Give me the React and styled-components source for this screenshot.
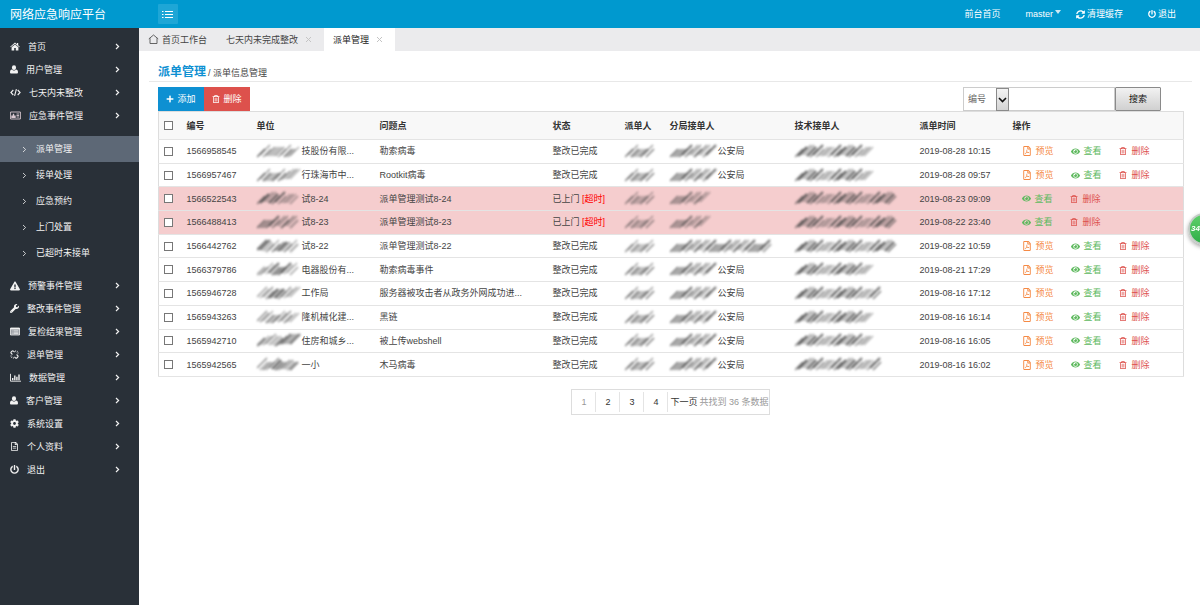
import React from "react";
import styled, { createGlobalStyle, css } from "styled-components";
import {
  FaExclamationTriangle, FaWrench, FaCog, FaRegFileAlt, FaPowerOff,
  FaPlus, FaRegTrashAlt, FaRegFilePdf, FaEye, FaSyncAlt,
} from "react-icons/fa";

const Global = createGlobalStyle`
  * { box-sizing: border-box; }
  body {
    margin: 0;
    background: #fff;
    color: #444;
    font: 9px/12px "Liberation Sans", "Noto Sans CJK SC", sans-serif;
  }
  button, input, select { font: inherit; color: inherit; margin: 0; }
  a { color: inherit; text-decoration: none; }
`;

const Page = styled.div`
  display: flex;
  flex-direction: column;
  min-height: 100vh;
`;

const TopBar = styled.header`
  display: flex;
  align-items: center;
  height: 28px;
  padding-right: 24px;
  background: #0099cf;
  color: #fff;
`;

const Brand = styled.div`
  width: 158px;
  padding: 2px 0 0 10px;
  font-size: 12px;
  line-height: 20px;
`;

const MenuToggle = styled.button`
  display: grid;
  place-items: center;
  width: 20px;
  height: 20px;
  padding: 0;
  border: 0;
  border-radius: 1px;
  background: #1ea6d6;
`;

const TopLinks = styled.nav`
  display: flex;
  align-items: center;
  gap: 25px;
  margin-left: auto;
`;

const AccountLinks = styled.div`
  display: flex;
  gap: 15px;
`;

const TopLink = styled.a`
  display: flex;
  align-items: center;
  gap: 2px;
`;

const Caret = styled.span`
  border: 3px solid transparent;
  border-top: 4px solid #cdeaf5;
  border-bottom: 0;
  margin-bottom: 4px;
`;

const Body = styled.div`
  display: flex;
  flex: 1;
`;

const Sidebar = styled.aside`
  flex: none;
  width: 139px;
  padding-top: 7px;
  background: #293038;
  color: #f2f2f2;
`;

const MenuItem = styled.a`
  display: flex;
  align-items: center;
  gap: 8px;
  height: 23px;
  padding: 0 19px 0 10px;
  svg { flex: none; }
  & > svg:last-child { margin-left: auto; }
`;

const SubMenu = styled.div`
  padding: 9px 0 8px;
`;

const SubItem = styled.a`
  display: flex;
  align-items: center;
  gap: 9px;
  height: 26px;
  padding-left: 22px;
  background: ${(p) => (p.$active ? "#5d6876" : "transparent")};
`;

const Main = styled.main`
  flex: 1;
  min-width: 0;
`;

const Tabs = styled.nav`
  display: flex;
  height: 23px;
  background: #ebebed;
`;

const Tab = styled.a`
  display: flex;
  align-items: center;
  gap: ${(p) => (p.$home ? "3px" : "7px")};
  padding: 0 ${(p) => (p.$home ? "10px" : "12px")} 0 9px;
  color: ${(p) => (p.$active ? "#222" : "#444")};
  background: ${(p) => (p.$active ? "#fff" : "transparent")};
`;

const Heading = styled.div`
  display: flex;
  align-items: baseline;
  gap: 2px;
  height: 31px;
  margin: 0 8px 0 10px;
  padding: 11px 0 0 9px;
  border-bottom: 1px solid #e8e8e8;
`;

const Title = styled.h1`
  margin: 0;
  color: #0e90d2;
  font-size: 12px;
  line-height: 20px;
`;

const Content = styled.section`
  padding: 5px 17px 0 19px;
`;

const Toolbar = styled.div`
  display: flex;
  justify-content: space-between;
  padding-right: 22px;
  height: 24px;
`;

const Group = styled.div`
  display: flex;
`;

const ActionButton = styled.button`
  display: flex;
  align-items: center;
  justify-content: center;
  gap: 3px;
  width: 46px;
  height: 24px;
  padding: 0;
  border: 0;
  color: #fff;
  background: ${(p) => (p.$danger ? "#dd514c" : "#0e90d2")};
`;

const SelectWrap = styled.div`
  display: flex;
  position: relative;
  width: 46px;
`;

const Select = styled.select`
  appearance: none;
  width: 100%;
  padding: 0 0 0 4px;
  border: 1px solid #ccc;
  border-radius: 0;
  background: #fff;
  color: #666;
`;

const SelectArrow = styled.span`
  position: absolute;
  top: 1px;
  right: 0;
  bottom: 0;
  display: grid;
  place-items: center;
  width: 13px;
  border: 1px solid #8a8a8a;
  background: linear-gradient(#f4f4f4, #d4d4d4);
  pointer-events: none;
`;

const SearchInput = styled.input`
  width: 106px;
  border: 1px solid #ccc;
  border-left: 0;
  border-radius: 0;
  padding: 0 4px;
  background: #fff;
`;

const SearchButton = styled.button`
  width: 46px;
  padding: 0;
  border: 1px solid #8a8a8a;
  border-radius: 1px;
  background: linear-gradient(#f2f2f2, #d0d0d0);
  color: #111;
`;

const Table = styled.table`
  width: 100%;
  height: 266px;
  table-layout: fixed;
  border-collapse: collapse;
  border: 1px solid #ddd;
  th, td {
    padding: 0 0 0 5px;
    text-align: left;
    white-space: nowrap;
    border-bottom: 1px solid #e4e4e4;
  }
  th { height: 28px; background: #f8f8f8; color: #333; }
`;

const Row = styled.tr`
  background: ${(p) => (p.$overdue ? "#f5cdce" : "#fff")};
`;

const Cell = styled.div`
  display: flex;
  align-items: center;
`;

const Check = styled.input.attrs({ type: "checkbox" })`
  appearance: none;
  display: block;
  width: 9px;
  height: 9px;
  border: 1px solid #777;
  background: #fff;
  &:checked { background: #0e90d2; }
`;

const Overdue = styled.span`
  color: #f00;
`;

const Actions = styled.div`
  display: flex;
  align-items: center;
  gap: 17px;
  padding-left: 9px;
`;

const tones = {
  preview: css`color: #f58a45; gap: 4px;`,
  view: css`color: #5eb95e; gap: 4px;`,
  remove: css`color: #dd514c; gap: 5px;`,
};

const ActionLink = styled.a`
  display: flex;
  align-items: center;
  ${(p) => tones[p.$tone]}
`;

const Pager = styled.nav`
  display: flex;
  align-items: center;
  width: max-content;
  height: 26px;
  margin: 12px auto 0;
  border: 1px solid #ddd;
  color: #999;
`;

const PageLink = styled.a`
  width: 24px;
  line-height: 20px;
  text-align: center;
  border-right: 1px solid #e4e4e4;
  color: ${(p) => (p.$current ? "#999" : "#333")};
`;

const NextLink = styled.a`
  padding: 0 2px;
  color: #333;
`;

const Badge = styled.div`
  position: fixed;
  top: 213px;
  right: -20px;
  width: 32px;
  height: 32px;
  padding-left: 1px;
  border: 2px solid #c3ccc6;
  border-radius: 50%;
  background: linear-gradient(#5fd06b, #2fae48);
  box-shadow: 0 2px 4px rgba(0, 0, 0, 0.35);
  color: #fff;
  font-size: 8px;
  font-weight: bold;
  font-style: italic;
  line-height: 28px;
`;

const SmudgeSvg = styled.svg`
  display: block;
  flex: none;
  filter: blur(1px);
`;

/* Names are hidden behind slanted, smeared strokes. */
function Smudge({ width, seed = 1, light }) {
  const strokes = [];
  for (let x = 0, i = seed; x < width - 9; x += 3, i += 1) {
    const n = (i * i * 3 + seed * 5) % 13;
    const y = 13 - (n % 3);
    const len = 8 + (n % 3);
    strokes.push(
      <line key={x} x1={x} y1={y} x2={x + len} y2={y - len}
        stroke="#444" strokeWidth={n % 4 === 0 ? 2.4 : 1.4} opacity={(light ? 0.35 : 0.42) + (n % 5) * 0.09} />
    );
  }
  return (
    <SmudgeSvg width={width} height="15" aria-hidden="true">
      {strokes}
    </SmudgeSvg>
  );
}

const Chevron = ({ small }) => (
  <svg width="5" height="7" viewBox="0 0 5 7" fill="none" stroke="currentColor" strokeWidth={small ? 0.8 : 1.2}>
    <path d="M1 1l2.6 2.5L1 6" />
  </svg>
);

const Close = () => (
  <svg width="7" height="7" viewBox="0 0 7 7" stroke="#c4c4c4" strokeWidth="1">
    <path d="M1 1l5 5M6 1L1 6" />
  </svg>
);

const HomeIcon = () => (
  <svg width="10" height="9" viewBox="0 0 10 9" fill="currentColor">
    <path d="M5 .6L6.9 2.2V1h1.3v2.3L9.8 4.7l-.5.6L5 1.8.7 5.3l-.5-.6z" />
    <path d="M5 2.5L8.4 5.3v3.1H5.8V6H4.2v2.4H1.6V5.3z" />
  </svg>
);

const UserIcon = () => (
  <svg width="8" height="9" viewBox="0 0 8 9" fill="currentColor">
    <ellipse cx="4" cy="2.7" rx="2.1" ry="2.4" />
    <path d="M2 4.5c.6.8 1.2 1.1 2 1.1s1.400-.3 2-1.100C7.400 4.700 8 5.700 8 7.300 8 8.100 7.500 8.600 6.700 8.600H1.300C.5 8.600 0 8.100 0 7.300 0 5.700.6 4.700 2 4.500z" />
  </svg>
);

const CodeIcon = () => (
  <svg width="11" height="9" viewBox="0 0 11 9" fill="none" stroke="currentColor" strokeWidth="1.1">
    <path d="M3.300 2L.9 4.500l2.400 2.500M7.700 2l2.400 2.500L7.700 7M6.400 1.200L4.600 7.800" />
  </svg>
);

const CardIcon = () => (
  <svg width="11" height="9" viewBox="0 0 11 9" fill="none" stroke="#d9c8d0" strokeWidth="0.9">
    <path d="M.6 1h9.800v7H.6zM6.500 3h2.600M6.500 4.500h2.600M6.500 6h2.600" />
    <path d="M2 6.400V5.200h3v1.200zM3.500 2.700v2" strokeWidth="1.400" />
  </svg>
);

const ListIcon = () => (
  <svg width="10" height="9" viewBox="0 0 10 9" fill="none" stroke="currentColor" strokeWidth="0.8">
    <path d="M.5 1h9v7h-9z" fill="#8d9299" />
    <path d="M.5 1.700h9" strokeWidth="1.500" />
    <path d="M1.700 3.800h.9M3.400 3.800h5M1.700 5.200h.9M3.400 5.200h5M1.700 6.600h.9M3.400 6.600h5" />
  </svg>
);

const BrokenChainIcon = () => (
  <svg width="9" height="9" viewBox="0 0 9 9" fill="none" stroke="currentColor" strokeWidth="1.100">
    <path d="M4.600 2.200L3.500 1.200c-.5-.5-1.100-.4-1.500 0l-.7.7c-.4.4-.5 1 0 1.500l1.100 1.100" />
    <path d="M4.400 6.800l1.100 1c.5.5 1.100.4 1.500 0l.7-.7c.4-.4.5-1 0-1.500L6.600 4.500" />
    <path d="M5.600.3v1.500M8.700 3H7.200M7.900 1L6.700 2.200M.3 6h1.500M3.400 8.700V7.200M1.100 8l1.200-1.200" strokeWidth="0.7" />
  </svg>
);

const ChartIcon = () => (
  <svg width="11" height="9" viewBox="0 0 11 9" fill="none" stroke="currentColor">
    <path d="M.5.8v7.400H11" strokeWidth="0.9" />
    <path d="M2.700 7.200V5M4.800 7.200V2.600M6.900 7.200V3.800M9 7.200V1.600" strokeWidth="1.400" />
  </svg>
);

const before = [
  ["首页", HomeIcon],
  ["用户管理", UserIcon],
  ["七天内未整改", CodeIcon],
  ["应急事件管理", CardIcon],
];
const sub = ["派单管理", "接单处理", "应急预约", "上门处置", "已超时未接单"];
const after = [
  ["预警事件管理", FaExclamationTriangle, 10],
  ["整改事件管理", FaWrench, 9],
  ["复检结果管理", ListIcon],
  ["退单管理", BrokenChainIcon],
  ["数据管理", ChartIcon],
  ["客户管理", UserIcon],
  ["系统设置", FaCog, 9],
  ["个人资料", FaRegFileAlt, 9],
  ["退出", FaPowerOff, 9],
];

const columns = [
  ["编号", 70], ["单位", 123], ["问题点", 173], ["状态", 72], ["派单人", 45],
  ["分局接单人", 125], ["技术接单人", 125], ["派单时间", 93], ["操作", 176],
];

const rows = [
  { id: "1566958545", unit: "技股份有限...", issue: "勒索病毒", time: "2019-08-28 10:15", tech: 80 },
  { id: "1566957467", unit: "行珠海市中...", issue: "Rootkit病毒", time: "2019-08-28 09:57", tech: 80 },
  { id: "1566522543", unit: "试8-24", issue: "派单管理测试8-24", time: "2019-08-23 09:09", tech: 105, late: true, branch: 42 },
  { id: "1566488413", unit: "试8-23", issue: "派单管理测试8-23", time: "2019-08-22 23:40", tech: 105, late: true, branch: 42 },
  { id: "1566442762", unit: "试8-22", issue: "派单管理测试8-22", time: "2019-08-22 10:59", tech: 105, branch: 105 },
  { id: "1566379786", unit: "电器股份有...", issue: "勒索病毒事件", time: "2019-08-21 17:29", tech: 80 },
  { id: "1565946728", unit: "工作局", issue: "服务器被攻击者从政务外网成功进...", time: "2019-08-16 17:12", tech: 90 },
  { id: "1565943263", unit: "隆机械化建...", issue: "黑链", time: "2019-08-16 16:14", tech: 80 },
  { id: "1565942710", unit: "住房和城乡...", issue: "被上传webshell", time: "2019-08-16 16:05", tech: 80 },
  { id: "1565942565", unit: "一小", issue: "木马病毒", time: "2019-08-16 16:02", tech: 90 },
];

function Menu({ items }) {
  return items.map(([label, Icon, size]) => (
    <MenuItem href="#" key={label}>
      <Icon size={size} />
      <span>{label}</span>
      <Chevron />
    </MenuItem>
  ));
}

function OrderRow({ row, index }) {
  return (
    <Row $overdue={row.late}>
      <td><Check aria-label={`选择 ${row.id}`} /></td>
      <td>{row.id}</td>
      <td><Cell><Smudge width={45} seed={index + 2} />{row.unit}</Cell></td>
      <td>{row.issue}</td>
      <td>{row.late ? <>已上门 <Overdue>[超时]</Overdue></> : "整改已完成"}</td>
      <td><Smudge width={31} seed={3} light={!!row.branch} /></td>
      <td>
        <Cell>
          <Smudge width={row.branch || 48} seed={5} light={row.late} />
          {!row.branch && "公安局"}
        </Cell>
      </td>
      <td><Smudge width={row.tech} seed={4} /></td>
      <td>{row.time}</td>
      <td>
        <Actions>
          {!row.late && <ActionLink href="#" $tone="preview"><FaRegFilePdf size={10} />预览</ActionLink>}
          <ActionLink href="#" $tone="view"><FaEye size={9} />查看</ActionLink>
          <ActionLink href="#" $tone="remove"><FaRegTrashAlt size={8} />删除</ActionLink>
        </Actions>
      </td>
    </Row>
  );
}

export default function App() {
  return (
    <Page>
      <Global />
      <TopBar>
        <Brand>网络应急响应平台</Brand>
        <MenuToggle aria-label="菜单">
          <svg width="12" height="9" viewBox="0 0 12 9" stroke="#fff" strokeWidth="1">
            <path d="M0 1.5h1.5M3 1.5h8M0 4.5h1.5M3 4.5h8M0 7.5h1.5M3 7.5h8" />
          </svg>
        </MenuToggle>
        <TopLinks>
          <TopLink href="#">前台首页</TopLink>
          <AccountLinks>
            <TopLink href="#">master<Caret /></TopLink>
            <TopLink href="#"><FaSyncAlt size={9} />清理缓存</TopLink>
          </AccountLinks>
          <TopLink href="#"><FaPowerOff size={8} />退出</TopLink>
        </TopLinks>
      </TopBar>
      <Body>
        <Sidebar>
          <Menu items={before} />
          <SubMenu>
            {sub.map((label, i) => (
              <SubItem href="#" key={label} $active={i === 0}><Chevron small />{label}</SubItem>
            ))}
          </SubMenu>
          <Menu items={after} />
        </Sidebar>
        <Main>
          <Tabs>
            <Tab href="#" $home>
              <svg width="11" height="11" viewBox="0 0 11 11" fill="none" stroke="#555" strokeWidth="0.9">
                <path d="M.8 4.9L5.5 1l4.7 3.9M2 4.2v5.3h7V4.2" />
              </svg>
              首页工作台
            </Tab>
            <Tab href="#">七天内未完成整改<Close /></Tab>
            <Tab href="#" $active>派单管理<Close /></Tab>
          </Tabs>
          <Heading>
            <Title>派单管理</Title>
            <span>/ 派单信息管理</span>
          </Heading>
          <Content>
            <Toolbar>
              <Group>
                <ActionButton><FaPlus size={8} />添加</ActionButton>
                <ActionButton $danger><FaRegTrashAlt size={8} />删除</ActionButton>
              </Group>
              <Group>
                <SelectWrap>
                  <Select aria-label="搜索字段" defaultValue="编号"><option>编号</option></Select>
                  <SelectArrow>
                    <svg width="9" height="6" viewBox="0 0 9 6" fill="none" stroke="#111" strokeWidth="1.6">
                      <path d="M1 1l3.5 3.5L8 1" />
                    </svg>
                  </SelectArrow>
                </SelectWrap>
                <SearchInput aria-label="搜索内容" />
                <SearchButton>搜索</SearchButton>
              </Group>
            </Toolbar>
            <Table>
              <colgroup>
                <col width="23" />
                {columns.map(([label, width]) => <col key={label} width={width} />)}
              </colgroup>
              <thead>
                <tr>
                  <th><Check aria-label="全选" /></th>
                  {columns.map(([label]) => <th key={label}>{label}</th>)}
                </tr>
              </thead>
              <tbody>
                {rows.map((row, i) => <OrderRow key={row.id} row={row} index={i} />)}
              </tbody>
            </Table>
            <Pager>
              <PageLink href="#" $current>1</PageLink>
              <PageLink href="#">2</PageLink>
              <PageLink href="#">3</PageLink>
              <PageLink href="#">4</PageLink>
              <NextLink href="#">下一页</NextLink>
              <span>共找到 36 条数据</span>
            </Pager>
          </Content>
        </Main>
      </Body>
      <Badge>34</Badge>
    </Page>
  );
}
